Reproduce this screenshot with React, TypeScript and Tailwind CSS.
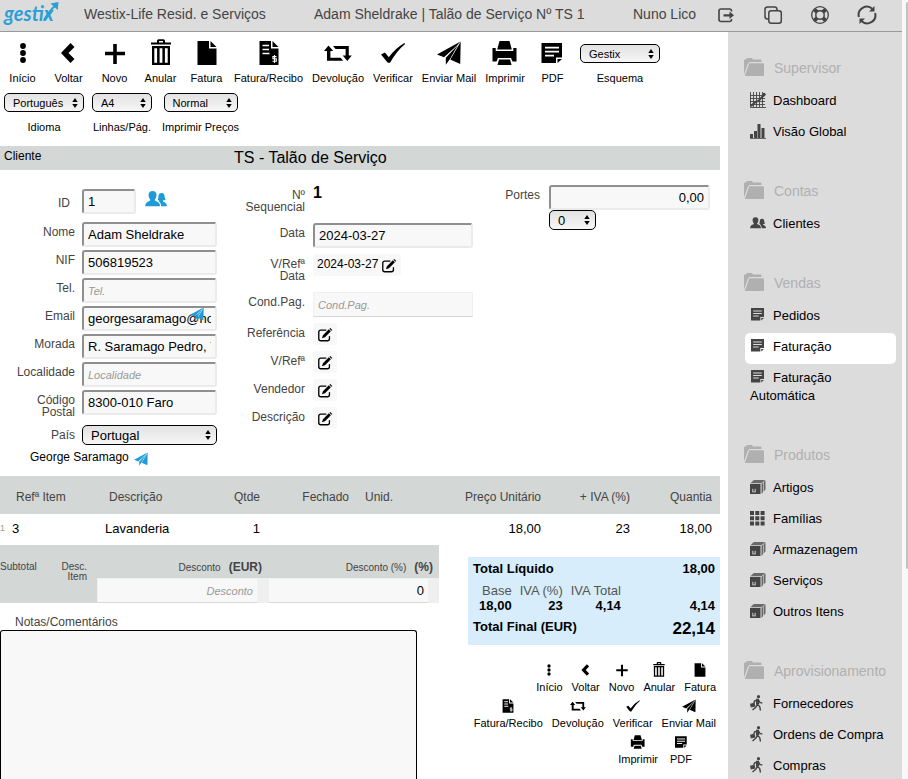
import type { ReactNode } from "react";
import clsx from "clsx";

type IconProps = { className?: string };

function Svg({
  className,
  box = 28,
  children,
}: {
  className?: string;
  box?: number;
  children: ReactNode;
}) {
  return (
    <svg
      viewBox={`0 0 ${box} ${box}`}
      fill="currentColor"
      className={className}
      aria-hidden="true"
    >
      {children}
    </svg>
  );
}

/* Toolbar icons */

const DotsIcon = ({ className }: IconProps) => (
  <Svg className={className}>
    <circle cx="14" cy="7" r="2.9" />
    <circle cx="14" cy="14" r="2.9" />
    <circle cx="14" cy="21" r="2.9" />
  </Svg>
);

const BackIcon = ({ className }: IconProps) => (
  <Svg className={className}>
    <path d="M15.5 4l4 4-6 6 6 6-4 4L6 14z" />
  </Svg>
);

const PlusIcon = ({ className }: IconProps) => (
  <Svg className={className}>
    <path d="M12.2 5h3.6v7.7H24v3.6h-8.2V25h-3.6v-8.7H4v-3.6h8.2z" />
  </Svg>
);

const TrashIcon = ({ className }: IconProps) => (
  <Svg className={className}>
    <path d="M4 3.5h6V1.8Q10 .2 11.6.2h4.8Q18 .2 18 1.8v1.7h6v2H4zM12 3.5h4V2h-4z" fillRule="evenodd" />
    <path
      d="M5 7h18v19H5zM7.3 9.2v14.6h2.8V9.2zM12.6 9.2v14.6h2.8V9.2zM17.9 9.2v14.6h2.8V9.2z"
      fillRule="evenodd"
    />
  </Svg>
);

const FileIcon = ({ className }: IconProps) => (
  <Svg className={className}>
    <path d="M4.5 2H16v7.5h7.5V26h-19z" />
    <path d="M17.5 2l6 6h-6z" />
  </Svg>
);

const ReceiptIcon = ({ className }: IconProps) => (
  <Svg className={className}>
    <path d="M4.5 2H16v7.5h7.5V26h-19z" />
    <path d="M17.5 2l6 6h-6z" />
    <path d="M7.5 6.5H14M7.5 10.5H14M7.5 14.5h7" stroke="white" strokeWidth="1.7" />
    <path
      d="M21.5 17.6h-3.6v2.2h3.4v2.4h-3.8M19.5 16v8"
      stroke="white"
      strokeWidth="1.1"
      fill="none"
    />
  </Svg>
);

const RetweetIcon = ({ className }: IconProps) => (
  <Svg className={className}>
    <path d="M4.5 6.5l4.700 5.600H6.400v6.700h10.200l2.600 3H3V12.100H0z" />
    <path d="M9 7h15.800v9.400h3L23.300 22l-4.600-5.600h2.900v-6.300H11.600z" />
  </Svg>
);

const CheckIcon = ({ className }: IconProps) => (
  <Svg className={className}>
    <path d="M2 15.500l4-2 3.800 4.700Q16 9.500 25.500 4l.6.900Q17.500 12 11 23.800H8.800z" />
  </Svg>
);

const PlaneIcon = ({ className }: IconProps) => (
  <Svg className={className}>
    <path d="M25.500 2.500L2 15.500 9 18.200 22 6.500z" />
    <path d="M22.800 6.300L10.800 18.800v7l4-5.500z" />
    <path d="M25.700 2.800L15.300 20.500 25.200 25z" />
  </Svg>
);

const PrinterIcon = ({ className }: IconProps) => (
  <Svg className={className}>
    <path d="M8.500 2h10l2.300 8.500H6.200z" />
    <path d="M1.500 9h3.200v3h17.600V9h3.200v13.500h-4l-1.500-3.500H7l-1.500 3.500h-4z" />
    <path d="M8 20.500h11l1.500 5.500h-14z" />
  </Svg>
);

const NoteIcon = ({ className }: IconProps) => (
  <Svg className={className}>
    <path d="M3.500 4h20.500v14.500h-6V24H3.500z" />
    <path d="M19.500 24v-4H24z" />
    <path d="M7 8.700h14M7 12.700h14M7 16.700h9" stroke="white" strokeWidth="1.700" />
  </Svg>
);

/* Header icons */

const ExitIcon = ({ className }: IconProps) => (
  <Svg box={20} className={className}>
    <path
      d="M15.500 6.500V6q0-2-2-2H5Q3 4 3 6v8.500q0 2 2 2h8.500q2 0 2-2V14"
      fill="none"
      stroke="currentColor"
      strokeWidth="1.600"
    />
    <path d="M7.500 9.200h6V6.500l4.500 3.800-4.500 3.800v-2.700h-6z" />
  </Svg>
);

const CopyIcon = ({ className }: IconProps) => (
  <Svg box={20} className={className}>
    <g fill="none" stroke="currentColor" strokeWidth="1.500">
      <rect x="5.800" y="5.800" width="12.500" height="12.500" rx="2.500" />
      <path d="M5.800 14H4.500Q2 14 2 11.500v-7Q2 2 4.500 2h7Q14 2 14 4.500v1.300" />
    </g>
  </Svg>
);

const LifebuoyIcon = ({ className }: IconProps) => (
  <Svg box={20} className={className}>
    <g fill="none" stroke="currentColor">
      <circle cx="10" cy="10" r="8.300" strokeWidth="1.300" />
      <circle cx="10" cy="10" r="4.200" strokeWidth="1.400" />
      <path
        d="M4.300 4.300l2.900 2.900M15.700 4.300l-2.900 2.900M4.300 15.700l2.900-2.900M15.700 15.700l-2.900-2.900"
        strokeWidth="4"
      />
    </g>
  </Svg>
);

const RefreshIcon = ({ className }: IconProps) => (
  <Svg box={20} className={className}>
    <g fill="none" stroke="currentColor" strokeWidth="2">
      <path d="M1.900 12A8.200 8.200 0 0 1 15.500 4" />
      <path d="M18.100 8A8.200 8.200 0 0 1 4.500 16" />
    </g>
    <path d="M17.500 1v5.500H12zM2.500 19v-5.500H8z" />
  </Svg>
);

/* Form and sidebar icons */

const PeopleIcon = ({ className }: IconProps) => (
  <Svg box={22} className={className}>
    <path d="M7.500 3c2.800 0 4.200 1.700 4 4.400-.1 1.700-.9 3-1.600 3.900v1.200c1 1 5 1.200 5.300 5.700H.2c.2-4.500 4-4.700 5-5.700v-1.200C4.400 10.400 3.700 9.100 3.600 7.400 3.400 4.700 4.900 3 7.500 3z" />
    <path d="M16.500 5c2.300 0 3.100 1.700 3.100 3.600 0 1.200.6 2 1 3-.8.8-1.900.7-2.600.9v.9c.8.700 3.700 1 4 4.800h-5.800c-.1-2.600-1.300-4.300-2.900-5.200.5-.1.900-.2 1.200-.4-.7-.2-1.400-.4-1.900-.8.500-1 .9-2 .9-3.200C13.500 6.700 14.200 5 16.500 5z" />
  </Svg>
);

const EditIcon = ({ className }: IconProps) => (
  <Svg box={18} className={className}>
    <path
      d="M10.500 3.500H4.300Q2 3.500 2 5.800v7.400q0 2.300 2.300 2.300h7.400q2.300 0 2.300-2.300v-2.700"
      fill="none"
      stroke="currentColor"
      strokeWidth="1.500"
    />
    <path d="M5.500 12.700l1.200-3.500 6.600-6.600 2.300 2.300L9 11.500zM14 1.900l.9-.9 2.300 2.300-.9.900z" />
  </Svg>
);

const FolderIcon = ({ className }: IconProps) => (
  <Svg box={20} className={className}>
    <path d="M0 16.500V2.500Q0 1.500 1 1.500h1L3 0h5l1 1.500h7.500q1 0 1 1V4H5.500L4 5.500z" />
    <path d="M5.300 5.200H19q1 0 1 1V17q0 1-1 1H.8z" />
  </Svg>
);

const ChartIcon = ({ className }: IconProps) => (
  <Svg box={16} className={className}>
    <path
      d="M.5 0v15.500H16M3.500 0v15M6.500 0v15M9.500 0v15M12.500 0v15M0 3.500h15M0 6.500h15M0 9.500h15M0 12.500h15"
      fill="none"
      stroke="currentColor"
      strokeWidth=".9"
    />
    <path d="M1 14l4.500-4 3-1L14 3" fill="none" stroke="currentColor" strokeWidth="2" />
    <circle cx="14" cy="2.500" r="1.700" />
  </Svg>
);

const BarsIcon = ({ className }: IconProps) => (
  <Svg box={16} className={className}>
    <path d="M0 11h3v4H0zM4 8h3v7H4zM7.500 1h3v14h-3zM11.500 5h3v10h-3zM0 15h16v.8H0z" />
  </Svg>
);

const BoxIcon = ({ className }: IconProps) => (
  <Svg box={16} className={className}>
    <path d="M0 5h10.500v10H0z" />
    <path d="M.3 4.300L3.800 1h11.500l-4 3.300zM11.500 5L13 3.600v9.600L11.500 15zM13.600 3.100L15.500 1.500v9l-1.900 2z" opacity=".75" />
    <path d="M2 12.800h4M2.800 12V9.800M5.200 12V9.800" stroke="#dcdcdc" strokeWidth=".9" />
  </Svg>
);

const GridIcon = ({ className }: IconProps) => (
  <Svg box={16} className={className}>
    <path d="M0 1h4v4H0zM5.300 1h4v4h-4zM10.600 1h4v4h-4zM0 6.200h4v4H0zM5.300 6.200h4v4h-4zM10.600 6.200h4v4h-4zM0 11.400h4v4H0zM5.300 11.400h4v4h-4zM10.600 11.400h4v4h-4z" />
  </Svg>
);

const WalkerIcon = ({ className }: IconProps) => (
  <Svg box={16} className={className}>
    <circle cx="8.500" cy="1.700" r="1.600" />
    <path
      d="M7.800 4.500L7 9l2.700 2.500.8 4M7.200 9.500L6 12l-3.500 3M8.500 5l1.500 2.500 2.300.7M7 4.800L4.500 6 3.700 8.500"
      fill="none"
      stroke="currentColor"
      strokeWidth="1.400"
    />
    <path d="M6 3.800h3l.3 5.500H6zM0 8.700l4.500-.9 1 3.700-4.700 1z" />
  </Svg>
);

const SideNoteIcon = ({ className }: IconProps) => (
  <Svg box={16} className={className}>
    <path d="M1 1h13v9h-3.700v3.500H1z" />
    <path d="M11.200 13.500V11H14z" />
    <path d="M3.200 4h8.600M3.200 6.500h8.600M3.200 9h5.500" stroke="#dcdcdc" strokeWidth="1" />
  </Svg>
);

const actions = [
  { label: "Início", Icon: DotsIcon },
  { label: "Voltar", Icon: BackIcon },
  { label: "Novo", Icon: PlusIcon },
  { label: "Anular", Icon: TrashIcon },
  { label: "Fatura", Icon: FileIcon },
  { label: "Fatura/Recibo", Icon: ReceiptIcon },
  { label: "Devolução", Icon: RetweetIcon },
  { label: "Verificar", Icon: CheckIcon },
  { label: "Enviar Mail", Icon: PlaneIcon },
  { label: "Imprimir", Icon: PrinterIcon },
  { label: "PDF", Icon: NoteIcon },
];

const footerRows = [actions.slice(0, 5), actions.slice(5, 9), actions.slice(9)];

const menu = [
  {
    title: "Supervisor",
    items: [
      { label: "Dashboard", Icon: ChartIcon },
      { label: "Visão Global", Icon: BarsIcon },
    ],
  },
  { title: "Contas", items: [{ label: "Clientes", Icon: PeopleIcon }] },
  {
    title: "Vendas",
    items: [
      { label: "Pedidos", Icon: SideNoteIcon },
      { label: "Faturação", Icon: SideNoteIcon, active: true },
      { label: "Faturação Automática", Icon: SideNoteIcon },
    ],
  },
  {
    title: "Produtos",
    items: [
      { label: "Artigos", Icon: BoxIcon },
      { label: "Famílias", Icon: GridIcon },
      { label: "Armazenagem", Icon: BoxIcon },
      { label: "Serviços", Icon: BoxIcon },
      { label: "Outros Itens", Icon: BoxIcon },
    ],
  },
  {
    title: "Aprovisionamento",
    items: [
      { label: "Fornecedores", Icon: WalkerIcon },
      { label: "Ordens de Compra", Icon: WalkerIcon },
      { label: "Compras", Icon: WalkerIcon },
    ],
  },
];

const clientFields = [
  { id: "nome", label: "Nome", value: "Adam Sheldrake" },
  { id: "nif", label: "NIF", value: "506819523" },
  { id: "tel", label: "Tel.", value: "", placeholder: "Tel." },
  { id: "email", label: "Email", value: "georgesaramago@hotmail.com" },
  { id: "morada", label: "Morada", value: "R. Saramago Pedro, 7" },
  { id: "localidade", label: "Localidade", value: "", placeholder: "Localidade" },
  { id: "postal", label: "Código Postal", value: "8300-010 Faro" },
];

const inputClass =
  "h-[25px] rounded-[3px] border-2 border-t-[#8f8f8f] border-l-[#8f8f8f] border-r-[#ebebeb] border-b-[#ebebeb] bg-[#f8f8f8] px-1 text-[13px] text-black placeholder:text-[11px] placeholder:italic placeholder:text-[#999]";

const flatInputClass =
  "h-[25px] w-full border border-[#f0f0f0] border-b-[#d8d8d8] bg-[#f8f8f8] px-1 text-[13px] text-black placeholder:text-[11px] placeholder:italic placeholder:text-[#999]";

function Select({
  id,
  value,
  label,
  className,
}: {
  id: string;
  value: string;
  label?: string;
  className?: string;
}) {
  return (
    <span className={clsx("relative block", className)}>
      <select
        id={id}
        aria-label={label}
        defaultValue={value}
        className="block h-full w-full appearance-none rounded-[5px] border border-black bg-linear-to-b from-[#e2e2e2] to-[#f6f6f6] pl-2 text-black"
      >
        <option>{value}</option>
      </select>
      <svg
        viewBox="0 0 6 10"
        aria-hidden="true"
        className="pointer-events-none absolute inset-y-0 right-[6px] my-auto h-[10px] w-[6px]"
      >
        <path d="M3 0l2.700 4H.3zM3 10L.3 6h5.400z" />
      </svg>
    </span>
  );
}

function Row({
  label,
  htmlFor,
  className,
  children,
}: {
  label: string;
  htmlFor?: string;
  className?: string;
  children: ReactNode;
}) {
  return (
    <div className={clsx("flex items-start", className)}>
      <label
        htmlFor={htmlFor}
        className="w-[75px] shrink-0 pt-1 pl-3 text-right text-xs leading-3 text-[#444]"
      >
        {label}
      </label>
      {children}
    </div>
  );
}

function Header() {
  return (
    <header className="flex h-8 items-center border-b border-[#999] bg-[#dcdcdc] pb-1 text-sm text-[#444]">
      <a href="#" className="relative w-[84px] shrink-0 pl-1">
        <span className="font-['Lato'] text-[20px] leading-6 font-bold text-[#2b9fd6] italic">
          gestix
        </span>
        <svg
          viewBox="0 0 18 20"
          aria-hidden="true"
          className="absolute top-0 left-[42px] h-[20px] w-[18px] text-[#2b9fd6]"
        >
          <path d="M2 19Q7 10 14 4" fill="none" stroke="currentColor" strokeWidth="2" />
          <path d="M8.500 2.500L16.500 1l-.8 8z" fill="currentColor" />
        </svg>
      </a>
      <span className="w-[230px] shrink-0">Westix-Life Resid. e Serviços</span>
      <span className="flex-1">Adam Sheldrake | Talão de Serviço Nº TS 1</span>
      <span className="w-[83px] shrink-0">Nuno Lico</span>
      <div className="flex shrink-0 gap-[27px] pt-[2px] pr-[25px]">
        <button aria-label="Sair">
          <ExitIcon className="size-5" />
        </button>
        <button aria-label="Duplicar">
          <CopyIcon className="size-5" />
        </button>
        <button aria-label="Ajuda">
          <LifebuoyIcon className="size-5" />
        </button>
        <button aria-label="Atualizar">
          <RefreshIcon className="size-5" />
        </button>
      </div>
    </header>
  );
}

function Toolbar() {
  return (
    <div className="pt-[7px] text-[11px] leading-[14px]">
      <div className="flex gap-[9px] pl-1">
        {actions.map(({ label, Icon }) => (
          <button
            key={label}
            className="flex min-w-[37px] shrink-0 flex-col items-center gap-1"
          >
            <Icon className="size-7" />
            {label}
          </button>
        ))}
        <div className="flex flex-col items-center gap-2 pt-[5px]">
          <Select id="esquema" value="Gestix" className="h-[19px] w-20" />
          <label htmlFor="esquema">Esquema</label>
        </div>
      </div>
      <div className="flex gap-2 pt-2 pl-1">
        <div className="flex flex-col items-center gap-2">
          <Select id="idioma" value="Português" className="h-[19px] w-20" />
          <label htmlFor="idioma">Idioma</label>
        </div>
        <div className="flex flex-col items-center gap-2">
          <Select id="linhas" value="A4" className="h-[19px] w-[60px]" />
          <label htmlFor="linhas">Linhas/Pág.</label>
        </div>
        <div className="flex flex-col items-center gap-2 pl-[2px]">
          <Select id="precos" value="Normal" className="h-[19px] w-[74px]" />
          <label htmlFor="precos">Imprimir Preços</label>
        </div>
      </div>
    </div>
  );
}

function ClientForm() {
  return (
    <div className="w-[230px] shrink-0 pt-[18px]">
      <div className="mb-2 flex items-center">
        <label
          htmlFor="id"
          className="w-[70px] pt-1 text-right text-xs text-[#444]"
        >
          ID
        </label>
        <input id="id" defaultValue="1" className={clsx(inputClass, "ml-3 w-[54px]")} />
        <button aria-label="Clientes" className="ml-[9px] pb-1 text-[#1e9bd7]">
          <PeopleIcon className="size-[22px]" />
        </button>
      </div>
      <div className="flex flex-col gap-[3px]">
        {clientFields.map((field) => (
          <Row key={field.id} label={field.label} htmlFor={field.id} className="h-[25px]">
            <div className="relative ml-[7px]">
              <input
                id={field.id}
                defaultValue={field.value}
                placeholder={field.placeholder}
                className={clsx(inputClass, "block w-[135px]")}
              />
              {field.id === "email" && (
                <button
                  aria-label="Enviar email"
                  className="absolute top-0 right-3 text-[#1e9bd7]"
                >
                  <PlaneIcon className="size-4" />
                </button>
              )}
            </div>
          </Row>
        ))}
      </div>
      <Row label="País" htmlFor="pais" className="pt-[10px]">
        <Select id="pais" value="Portugal" className="ml-[7px] h-5 w-[135px] text-[13px]" />
      </Row>
      <div className="flex items-center gap-1 pt-[2px] pl-[30px] text-xs">
        George Saramago
        <button aria-label="Enviar mensagem" className="pt-1 text-[#1e9bd7]">
          <PlaneIcon className="size-4" />
        </button>
      </div>
    </div>
  );
}

function EditButton({ label, value }: { label: string; value?: string }) {
  return (
    <button
      aria-label={`Editar ${label}`}
      className="ml-2 flex h-[22px] items-start gap-[3px] rounded-[3px] bg-[#f8f8f8] px-1 text-xs leading-5"
    >
      {value}
      <EditIcon className="mt-1 size-4" />
    </button>
  );
}

function DocumentForm() {
  return (
    <div className="w-[243px] shrink-0 pt-[15px]">
      <Row label="Nº Sequencial" className="h-[38px]">
        <span className="ml-2 text-base leading-4 font-bold">1</span>
      </Row>
      <Row label="Data" htmlFor="data" className="h-[31px]">
        <input
          id="data"
          defaultValue="2024-03-27"
          className={clsx(inputClass, "ml-2 w-[160px]")}
        />
      </Row>
      <Row label="V/Refª Data" className="h-[38px]">
        <EditButton label="V/Refª Data" value="2024-03-27" />
      </Row>
      <Row label="Cond.Pag." htmlFor="cond" className="h-[31px]">
        <div className="ml-2 w-[160px]">
          <input id="cond" placeholder="Cond.Pag." className={flatInputClass} />
        </div>
      </Row>
      <div className="flex flex-col gap-[6px]">
        {["Referência", "V/Refª", "Vendedor", "Descrição"].map((label) => (
          <Row key={label} label={label}>
            <EditButton label={label} />
          </Row>
        ))}
      </div>
    </div>
  );
}

function ItemsTable() {
  return (
    <table className="w-full table-fixed text-[13px]">
      <colgroup>
        <col className="w-[12px]" />
        <col className="w-[93px]" />
        <col className="w-[100px]" />
        <col className="w-[55px]" />
        <col className="w-[89px]" />
        <col className="w-[60px]" />
        <col />
        <col className="w-[89px]" />
        <col className="w-[90px]" />
      </colgroup>
      <thead>
        <tr className="h-[38px] bg-[#d3d7d5] text-xs text-[#444] *:pt-1 *:font-normal">
          <th />
          <th className="pl-1 text-left">Refª Item</th>
          <th className="pl-1 text-left">Descrição</th>
          <th className="text-right">Qtde</th>
          <th className="text-right">Fechado</th>
          <th className="pl-4 text-left">Unid.</th>
          <th className="text-right">Preço Unitário</th>
          <th className="text-right">+ IVA (%)</th>
          <th className="pr-2 text-right">Quantia</th>
        </tr>
      </thead>
      <tbody>
        <tr className="h-[31px] *:pb-[2px]">
          <td className="text-[9px] text-[#999]">1</td>
          <td>3</td>
          <td>Lavanderia</td>
          <td className="text-right">1</td>
          <td />
          <td />
          <td className="text-right">18,00</td>
          <td className="text-right">23</td>
          <td className="pr-2 text-right">18,00</td>
        </tr>
      </tbody>
    </table>
  );
}

function Discounts() {
  return (
    <div className="flex h-[58px] w-[439px] bg-[#d3d7d5] text-[10px] leading-[10px] text-[#444]">
      <span className="w-[50px] pt-[17px]">Subtotal</span>
      <span className="w-[37px] pt-[17px] text-right">Desc. Item</span>
      <div className="ml-[10px] flex flex-1 flex-col">
        <div className="flex h-[33px] items-baseline pt-[14px]">
          <label htmlFor="desconto" className="w-[165px] text-right">
            Desconto<b className="pl-2 text-xs">(EUR)</b>
          </label>
          <label htmlFor="descontoPct" className="flex-1 pr-[6px] text-right">
            Desconto (%)<b className="pl-2 text-xs">(%)</b>
          </label>
        </div>
        <div className="flex gap-[10px] bg-[#efefef] pr-[10px]">
          <input
            id="desconto"
            placeholder="Desconto"
            className={clsx(flatInputClass, "text-right")}
          />
          <input
            id="descontoPct"
            defaultValue="0"
            className={clsx(flatInputClass, "text-right")}
          />
        </div>
      </div>
    </div>
  );
}

function Totals() {
  return (
    <div className="mt-3 bg-[#d7edfb] px-[5px] py-1 text-[13px] font-bold">
      <div className="flex justify-between leading-4">
        <span>Total Líquido</span>
        <span>18,00</span>
      </div>
      <div className="flex items-end justify-between pt-[6px]">
        <table className="leading-[15px]">
          <thead>
            <tr className="text-[#555] *:font-normal">
              <th className="pl-[9px] text-right">Base</th>
              <th className="pl-2 text-right">IVA (%)</th>
              <th className="pl-2 text-right">IVA Total</th>
            </tr>
          </thead>
          <tbody>
            <tr className="*:text-right">
              <td>18,00</td>
              <td>23</td>
              <td>4,14</td>
            </tr>
          </tbody>
        </table>
        <span className="leading-[15px]">4,14</span>
      </div>
      <div className="flex justify-between pt-1">
        <span>Total Final (EUR)</span>
        <span className="text-[17px] leading-6">22,14</span>
      </div>
    </div>
  );
}

function FooterActions() {
  return (
    <div className="flex flex-col gap-1 pt-[17px] pr-1 text-[11px] leading-[14px]">
      {footerRows.map((row, i) => (
        <div
          key={row[0].label}
          className={clsx("flex justify-end", i === 2 ? "gap-3 pr-6" : "gap-[9px]")}
        >
          {row.map(({ label, Icon }) => (
            <button key={label} className="flex flex-col items-center gap-[2px]">
              <Icon className="size-4" />
              {label}
            </button>
          ))}
        </div>
      ))}
    </div>
  );
}

function Sidebar() {
  return (
    <nav className="flex w-[174px] shrink-0 flex-col gap-[23px] bg-[#dcdcdc] pt-[17px] pr-[6px] pl-4">
      {menu.map((group) => (
        <section key={group.title}>
          <h2 className="flex h-[38px] items-center gap-[10px] text-sm text-[#b0b0b0]">
            <FolderIcon className="size-5 shrink-0" />
            {group.title}
          </h2>
          <ul className="pl-[1px]">
            {group.items.map(({ label, Icon, ...item }) => (
              <li key={label}>
                <a
                  href="#"
                  className={clsx(
                    "block rounded-[5px] pt-[5px] pb-2 pl-[5px] text-[13px] leading-[18px]",
                    "active" in item && "bg-white"
                  )}
                >
                  <Icon className="mr-[7px] inline-block size-4 align-[-3px] text-[#444]" />
                  {label}
                </a>
              </li>
            ))}
          </ul>
        </section>
      ))}
    </nav>
  );
}

export default function App() {
  return (
    <div className="flex h-screen overflow-hidden bg-white font-['Liberation_Sans',Arial,sans-serif] text-black">
      <div className="flex min-w-0 flex-1 flex-col">
        <Header />
        <div className="flex min-h-0 flex-1">
          <main className="flex min-w-0 flex-1 flex-col pr-2">
            <Toolbar />
            <div className="mt-3 flex h-6 shrink-0 bg-[#d3d7d5]">
              <h2 className="w-[234px] pt-[2px] pl-1 text-xs">Cliente</h2>
              <h1 className="text-base">TS - Talão de Serviço</h1>
            </div>
            <div className="flex h-[306px] shrink-0">
              <ClientForm />
              <DocumentForm />
              <div className="flex flex-1 items-start pt-[15px] pr-[10px]">
                <label
                  htmlFor="portes"
                  className="w-[67px] shrink-0 pt-[2px] text-right text-xs text-[#444]"
                >
                  Portes
                </label>
                <div className="ml-[9px] min-w-0 flex-1">
                  <input
                    id="portes"
                    defaultValue="0,00"
                    className={clsx(inputClass, "block w-full text-right")}
                  />
                  <Select
                    id="taxa"
                    label="Taxa de portes"
                    value="0"
                    className="h-5 w-[47px] text-[13px]"
                  />
                </div>
              </div>
            </div>
            <ItemsTable />
            <div className="flex min-h-0 flex-1 justify-between">
              <div className="flex flex-col">
                <Discounts />
                <label htmlFor="notas" className="pt-[11px] pl-[15px] text-xs text-[#444]">
                  Notas/Comentários
                </label>
                <textarea
                  id="notas"
                  className="w-[417px] flex-1 resize-none rounded-t-[3px] border border-b-0 border-black bg-[#f8f8f8]"
                />
              </div>
              <div className="w-[252px]">
                <Totals />
                <FooterActions />
              </div>
            </div>
          </main>
          <Sidebar />
        </div>
      </div>
      {/* Scroll track */}
      <div className="flex w-[6px] shrink-0 justify-end bg-[#f8f8f8] pt-[2px]">
        <div className="h-[73%] w-[2px] rounded-l-full bg-[#c1c1c1]" />
      </div>
    </div>
  );
}
